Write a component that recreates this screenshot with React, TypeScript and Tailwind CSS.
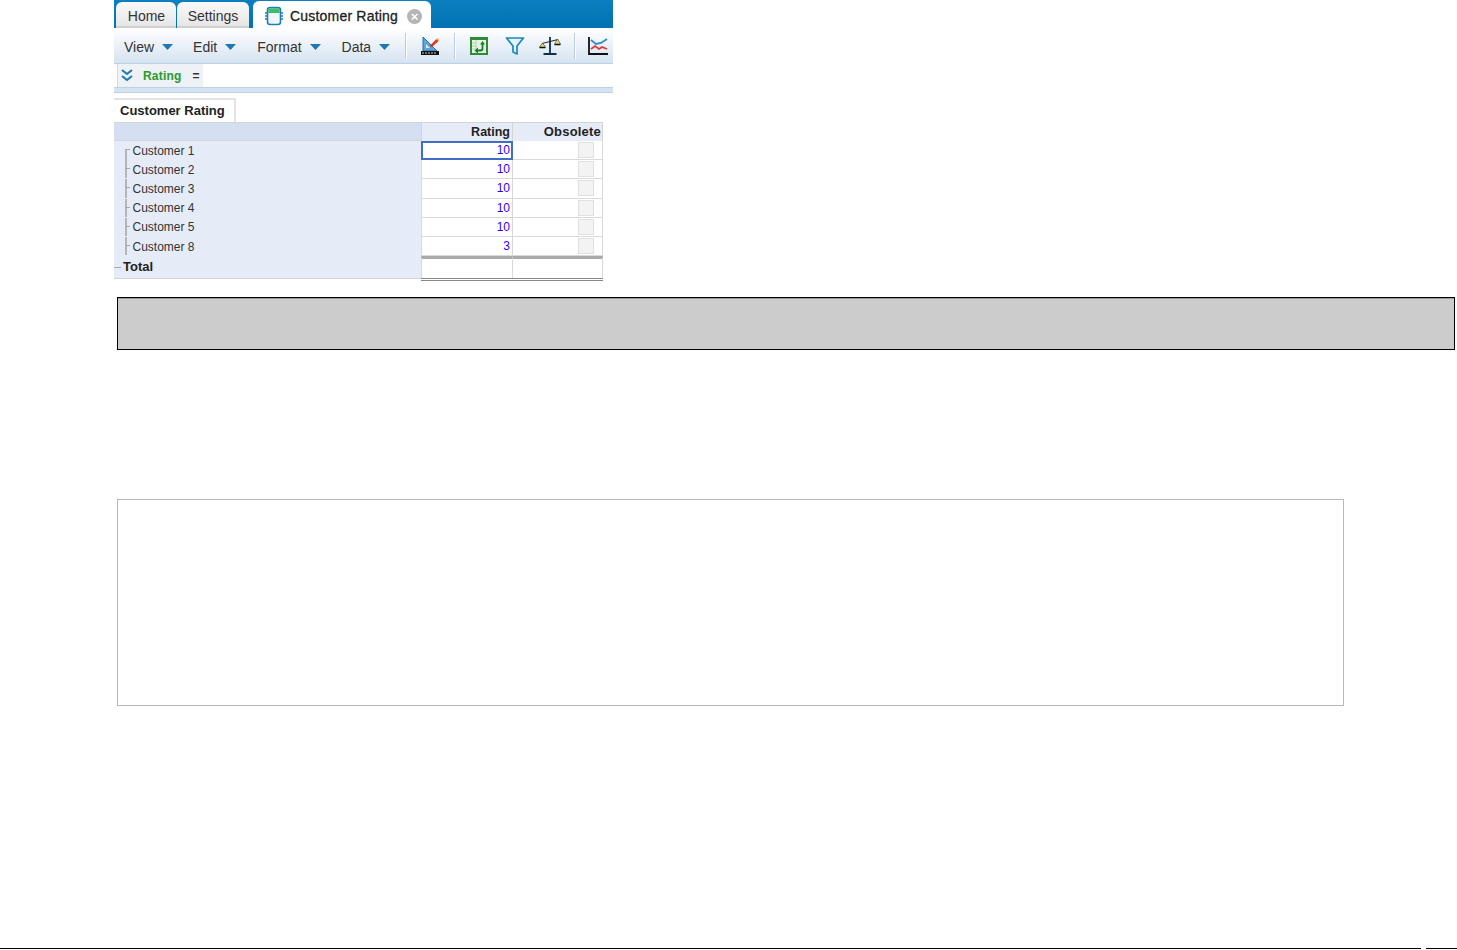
import React from "react";

const customers = [
  { name: "Customer 1", rating: "10" },
  { name: "Customer 2", rating: "10" },
  { name: "Customer 3", rating: "10" },
  { name: "Customer 4", rating: "10" },
  { name: "Customer 5", rating: "10" },
  { name: "Customer 8", rating: "3" },
];

const Caret = () => (
  <svg width="11" height="6" viewBox="0 0 11 6" className="ml-2 -translate-y-px">
    <path d="M0 0h11L5.5 6z" fill="#1f78b4" />
  </svg>
);

const Divider = () => <div className="h-[26px] w-px bg-[#b9cde2] shadow-[1px_0_0_#fff]" />;

const DbIcon = () => (
  <svg width="20" height="20" viewBox="0 0 20 20">
    <rect x="3.5" y="1.5" width="13" height="17" rx="2.5" fill="#eef6fb" stroke="#1c7fb5" strokeWidth="1.6" />
    <path d="M4.3 7V4a1.7 1.7 0 0 1 1.7-1.7h8A1.7 1.7 0 0 1 15.700 4v3z" fill="#3fbb6e" />
    <path d="M1 7h2.500M1 10h2.500M1 13h2.500M16.500 7H19M16.500 10H19M16.500 13H19" stroke="#1c7fb5" strokeWidth="1.6" />
  </svg>
);

const RulerIcon = () => (
  <svg width="20" height="20" viewBox="0 0 20 20">
    <path d="M3 1v14h14z" fill="#5aa6d8" stroke="#1c6fa8" />
    <path d="M6 8v4h4z" fill="#cfe6f5" />
    <path d="M9.500 10l7-7 2 2-7 6.500z" fill="#d8392b" />
    <path d="M16.500 3l1-1 2 2-1 1z" fill="#f0b93a" />
    <rect x="1" y="15" width="18" height="4" fill="#111" />
    <path d="M3 16v2M6 16v2M9 16v2M12 16v2M15 16v2" stroke="#fff" strokeWidth="0.8" />
  </svg>
);

const RefreshIcon = () => (
  <svg width="20" height="20" viewBox="0 0 20 20">
    <rect x="1" y="1" width="18" height="18" fill="#2e8b36" />
    <rect x="3" y="4" width="14" height="13" fill="#e6f3e2" />
    <path d="M7 4v13M3 7h4M3 10h4M3 13h4" stroke="#a9cfa9" strokeWidth="0.8" />
    <path d="M13.500 8v4.500c0 1.500-1 2-2 2H8.500" fill="none" stroke="#14802a" strokeWidth="1.8" />
    <path d="M11 8.500L13.500 5 16 8.500zM9 11.500v6L5.500 14.500z" fill="#14802a" />
  </svg>
);

const FunnelIcon = () => (
  <svg width="20" height="20" viewBox="0 0 20 20">
    <path d="M1.500 2h17l-6.500 8v8l-4-2v-6z" fill="#e3f3fb" stroke="#1c86bd" strokeWidth="1.700" strokeLinejoin="round" />
  </svg>
);

const ScaleIcon = () => (
  <svg width="22" height="20" viewBox="0 0 22 20">
    <path d="M11 1v16M4.500 18h13" fill="none" stroke="#0f2f4a" strokeWidth="1.800" />
    <path d="M3 7.500L19 3.500" stroke="#222" strokeWidth="1" />
    <path d="M0.500 11h6L3.500 7zM15.500 8h6l-3-5z" fill="#e9d970" stroke="#333" strokeWidth="0.6" />
    <path d="M0.500 11h6v1.300h-6zM15.500 8h6v1.300h-6z" fill="#111" />
  </svg>
);

const ChartIcon = () => (
  <svg width="20" height="20" viewBox="0 0 20 20">
    <path d="M1 1v17h19" fill="none" stroke="#111" strokeWidth="1.800" />
    <path d="M3 4l5 4 5-1 6-4" fill="none" stroke="#2a8fc6" strokeWidth="1.800" />
    <path d="M3 13l4-3 4 3 3-2 5 2" fill="none" stroke="#e0393b" strokeWidth="1.800" />
  </svg>
);

export default function App() {
  return (
    <div className="relative h-[950px] w-[1457px] overflow-hidden bg-white font-['Liberation_Sans',Arial,sans-serif]">
      <div className="pl-[114px]">
        {/* App window */}
        <div className="w-[499px] overflow-hidden">
          <div className="flex h-[28px] items-end gap-px bg-gradient-to-b from-[#0b7fc0] to-[#0272b0] pl-[2px]">
            <div className="flex h-[26px] w-[60px] items-center justify-center rounded-t-[6px] border-b-2 border-[#cfcfcf] bg-gradient-to-b from-[#fafafa] to-[#e6e6e6] pt-[4px] pl-[1px] text-[14px] text-[#333]">
              Home
            </div>
            <div className="flex h-[26px] w-[72px] items-center justify-center rounded-t-[6px] border-b-2 border-[#cfcfcf] bg-gradient-to-b from-[#fafafa] to-[#e6e6e6] pt-[4px] text-[14px] text-[#333]">
              Settings
            </div>
            <div className="ml-[3px] flex h-[27px] w-[178px] items-center rounded-t-[6px] bg-white pt-[3px] pl-[11px] text-[14px] text-[#222]">
              <DbIcon />
              <span className="ml-[6px] tracking-[0.2px] [-webkit-text-stroke:0.3px_#222]">Customer Rating</span>
              <span className="ml-[9px] flex h-[15px] w-[15px] items-center justify-center rounded-full bg-[#b5b5b5] text-[13px] leading-none font-bold text-white">
                ×
              </span>
            </div>
          </div>

          <div className="flex h-[35px] items-center bg-gradient-to-b from-white to-[#d6e3f1] text-[14px] text-[#333]">
            <div className="flex w-[291px] shrink-0 items-center pt-[4px] pl-[10px]">
              <span>View</span>
              <Caret />
              <span className="ml-[20px]">Edit</span>
              <Caret />
              <span className="ml-[21px]">Format</span>
              <Caret />
              <span className="ml-[21px]">Data</span>
              <Caret />
            </div>
            <div className="flex items-center">
              <Divider />
              <div className="mx-[14px]"><RulerIcon /></div>
              <Divider />
              <div className="ml-[14px]"><RefreshIcon /></div>
              <div className="ml-[16px]"><FunnelIcon /></div>
              <div className="ml-[14px]"><ScaleIcon /></div>
              <div className="mx-[13px]"><Divider /></div>
              <ChartIcon />
            </div>
          </div>

          <div className="flex h-[25px] items-center border-y border-[#bcd0e6] bg-white pl-[3px] text-[12px]">
            <div className="flex h-full w-[86px] items-center border-l border-[#cfdbe8] bg-[#eef1f5] pl-[2px]">
              <svg width="14" height="14" viewBox="0 0 14 14">
                <path d="M2 1l5 4 5-4M2 7l5 4 5-4" fill="none" stroke="#1b78b3" strokeWidth="2" />
              </svg>
              <span className="ml-[9px] tracking-[0.2px] font-bold text-[#2a9a2a]">Rating</span>
              <span className="ml-[11px] font-bold text-[#333]">=</span>
            </div>
          </div>
          <div className="h-[5px] border-b border-[#bcd0e6] bg-[#d5e2f1]" />
        </div>

        {/* Grid */}
        <div className="mt-[5px] flex h-[24px] w-[122px] items-center border-t-2 border-r-2 border-[#e3e3e3] pl-[6px] text-[13px] font-bold text-[#222]">
          Customer Rating
        </div>
        <div className="w-[489px]">
          <div className="flex h-[19px] border-t border-[#d4d4d4] text-[13px] font-bold text-[#222]">
            <div className="w-[307px] border-b border-[#cfd6e2] bg-[#d4dff2]" />
            <div className="flex w-[92px] items-center justify-end border-x border-[#d4d4d4] bg-[#e6ecf7] pr-[2px] text-[12.5px]">Rating</div>
            <div className="flex w-[90px] items-center justify-end border-r border-[#d4d4d4] bg-[#e6ecf7] pr-[1px] tracking-[0.2px]">Obsolete</div>
          </div>
          {customers.map((c, i) => (
            <div key={c.name} className="flex h-[19.2px] text-[12px]">
              <div className="flex w-[307px] items-center bg-[#e6ecf7] pl-[11px] text-[#333]">
                <div className="relative mr-[2px] h-full w-[6px]">
                  <div className={`absolute left-0 w-[2px] bg-[#b5b5b5] ${i === 0 ? "top-[8px] bottom-0" : "top-0 bottom-[1px]"}`} />
                  <div className="absolute top-[8px] left-0 h-px w-[5px] bg-[#aaa]" />
                </div>
                <span className="-translate-x-[0.5px] -translate-y-[0.5px]">{c.name}</span>
              </div>
              <div
                className={`flex w-[92px] items-center justify-end border-x border-b border-[#d9d9d9] pr-[2px] text-[#3300ff] ${
                  i === 0 ? "outline-2 -outline-offset-2 outline-[#3e6fc4]" : ""
                }`}
              >
                {c.rating}
              </div>
              <div className="flex w-[90px] items-center justify-end border-r border-b border-[#d9d9d9] pr-[8px]">
                <div className="h-[16px] w-[16px] border border-[#e0e0e0] bg-[#f3f3f3]" />
              </div>
            </div>
          ))}
          <div className="flex h-[23px] border-b border-[#d4d4d4] text-[13px] font-bold text-[#222]">
            <div className="flex w-[307px] items-center bg-[#e6ecf7]">
              <div className="mr-[2px] h-px w-[7px] bg-[#aaa]" />
              Total
            </div>
            <div className="w-[92px] border-x border-t-[3px] border-x-[#d9d9d9] border-t-[#aaa]" />
            <div className="w-[90px] border-r border-t-[3px] border-r-[#d9d9d9] border-t-[#aaa]" />
          </div>
          <div className="-mt-px ml-[307px] h-[3px] w-[182px] border-y border-[#888]" />
        </div>
      </div>

      <div className="mt-[16px] ml-[117px] h-[53px] w-[1338px] border border-black bg-[#cccccc] shadow-[inset_0_1px_0_#999]" />
      <div className="mt-[149px] ml-[117px] h-[207px] w-[1227px] border border-[#b8b8b8] bg-white" />

      <div className="absolute right-0 bottom-[1px] left-0 flex gap-[5px]">
        <div className="h-px w-[1421px] bg-black" />
        <div className="h-px flex-1 bg-black" />
      </div>
    </div>
  );
}
